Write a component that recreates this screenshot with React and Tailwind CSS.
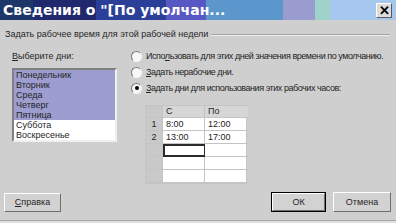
import React from 'react';

const days = [
  { name: 'Понедельник', sel: true },
  { name: 'Вторник', sel: true },
  { name: 'Среда', sel: true },
  { name: 'Четверг', sel: true },
  { name: 'Пятница', sel: true },
  { name: 'Суббота', sel: false },
  { name: 'Воскресенье', sel: false },
];

const rows = [
  { n: '1', from: '8:00', to: '12:00' },
  { n: '2', from: '13:00', to: '17:00' },
  { n: '', from: '', to: '', active: true },
  { n: '', from: '', to: '' },
  { n: '', from: '', to: '' },
];

const Radio = ({ checked, children }) => (
  <div className="flex h-[16px] items-center">
    <span className="flex h-[11px] w-[11px] shrink-0 items-center justify-center rounded-full border border-t-[#7a7a7a] border-l-[#7a7a7a] border-b-[#f4f4f4] border-r-[#f4f4f4] bg-[#f7f7f7]">
      {checked && <span className="h-[4px] w-[4px] rounded-full bg-black" />}
    </span>
    <span className="ml-[4px] whitespace-nowrap tracking-[-0.45px]">{children}</span>
  </div>
);

const Button = ({ children, def, className = '' }) => (
  <div className={`${def ? 'border border-black' : ''} ${className}`}>
    <button className="flex h-full w-full items-center justify-center border border-t-white border-l-white border-b-[#6e6e6e] border-r-[#6e6e6e] bg-[#d2d2d2] text-[9px]">
      {children}
    </button>
  </div>
);

export default function App() {
  return (
    <div className="flex h-[223px] w-[396px] flex-col bg-[#cfcfcf] font-['Liberation_Sans',Arial,sans-serif] text-[9px] leading-[11px] text-[#262626]">
      {/* title bar */}
      <div className="flex h-[20px] shrink-0 items-center bg-[linear-gradient(90deg,#1d3868_0px,#1d3868_33px,#20296e_33px,#20296e_96px,#2c3f98_96px,#2c3f98_166px,#5858c4_166px,#5858c4_206px,#5b97cc_206px,#5b97cc_283px,#9a9bcf_283px,#9a9bcf_315px,#9fd3ca_315px,#9fd3ca_330px,#a7c8ee_330px,#a7c8ee_396px)] pl-[3px] pr-[4px]">
        <span className="font-['DejaVu_Sans',sans-serif] text-[14px] font-bold leading-[18px] text-white">
          Сведения о "[По умолчан...
        </span>
        <span className="ml-auto flex h-[15px] w-[16px] items-center justify-center border border-t-white border-l-white border-b-[#5a5a5a] border-r-[#5a5a5a] bg-[#dcdcdc] text-[13px] font-bold leading-none text-black">
          ✕
        </span>
      </div>

      {/* group header */}
      <div className="mt-[9px] flex items-center pl-[5px] pr-[6px]">
        <span className="whitespace-nowrap">Задать рабочее время для этой рабочей недели</span>
        <span className="ml-[3px] h-[2px] flex-1 border-t border-b border-t-[#a3a3a3] border-b-[#eeeeee]" />
      </div>

      <div className="mt-[8px] flex items-start pl-[12px]">
        {/* days */}
        <div className="flex w-[105px] shrink-0 flex-col pt-[3px]">
          <span>
            <span className="underline">В</span>ыберите дни:
          </span>
          <div className="mt-[6px] flex flex-col border-2 border-t-[#808080] border-l-[#808080] border-b-[#f0f0f0] border-r-[#f0f0f0] bg-white">
            {days.map((d) => (
              <div key={d.name} className={`h-[10px] pl-[2px] leading-[10px] ${d.sel ? 'bg-[#9d9dd0]' : ''}`}>
                {d.name}
              </div>
            ))}
          </div>
        </div>

        {/* options */}
        <div className="ml-[14px] flex flex-col">
          <Radio>
            Испо<span className="underline">л</span>ьзовать для этих дней значения времени по умолчанию.
          </Radio>
          <Radio>
            <span className="underline">З</span>адать нерабочие дни.
          </Radio>
          <Radio checked>
            <span className="underline">З</span>адать дни для использования этих рабочих часов:
          </Radio>

          <div className="ml-[14px] mt-[9px] grid w-[102px] grid-cols-[17px_42px_43px] border border-[#c4c4c4] bg-white">
            <div className="h-[12px] border-b border-r border-[#c4c4c4] bg-[#c9c9c9]" />
            <div className="h-[12px] border-b border-r border-[#c4c4c4] bg-[#d6d6d6] pl-[3px]">С</div>
            <div className="h-[12px] border-b border-[#c4c4c4] bg-[#d6d6d6] pl-[3px]">По</div>
            {rows.map((r, i) => (
              <React.Fragment key={i}>
                <div className="flex h-[13px] items-center justify-center border-b border-r border-[#c4c4c4] bg-[#c9c9c9]">{r.n}</div>
                <div className={`flex h-[13px] items-center border-r pl-[3px] ${r.active ? 'border-2 border-[#2a2a2a]' : 'border-b border-[#c4c4c4]'}`}>{r.from}</div>
                <div className="flex h-[13px] items-center border-b border-[#c4c4c4] pl-[3px]">{r.to}</div>
              </React.Fragment>
            ))}
          </div>
        </div>
      </div>

      {/* buttons */}
      <div className="mt-auto flex items-center pb-[8px] pl-[4px] pr-[5px]">
        <Button className="h-[19px] w-[57px]">
          <span><span className="underline">С</span>правка</span>
        </Button>
        <Button def className="ml-auto h-[20px] w-[55px]">ОК</Button>
        <Button className="ml-[7px] h-[20px] w-[58px]">Отмена</Button>
      </div>
      <div className="h-[3px] border-t border-[#a8a8a8] bg-[#dedede]" />
    </div>
  );
}
